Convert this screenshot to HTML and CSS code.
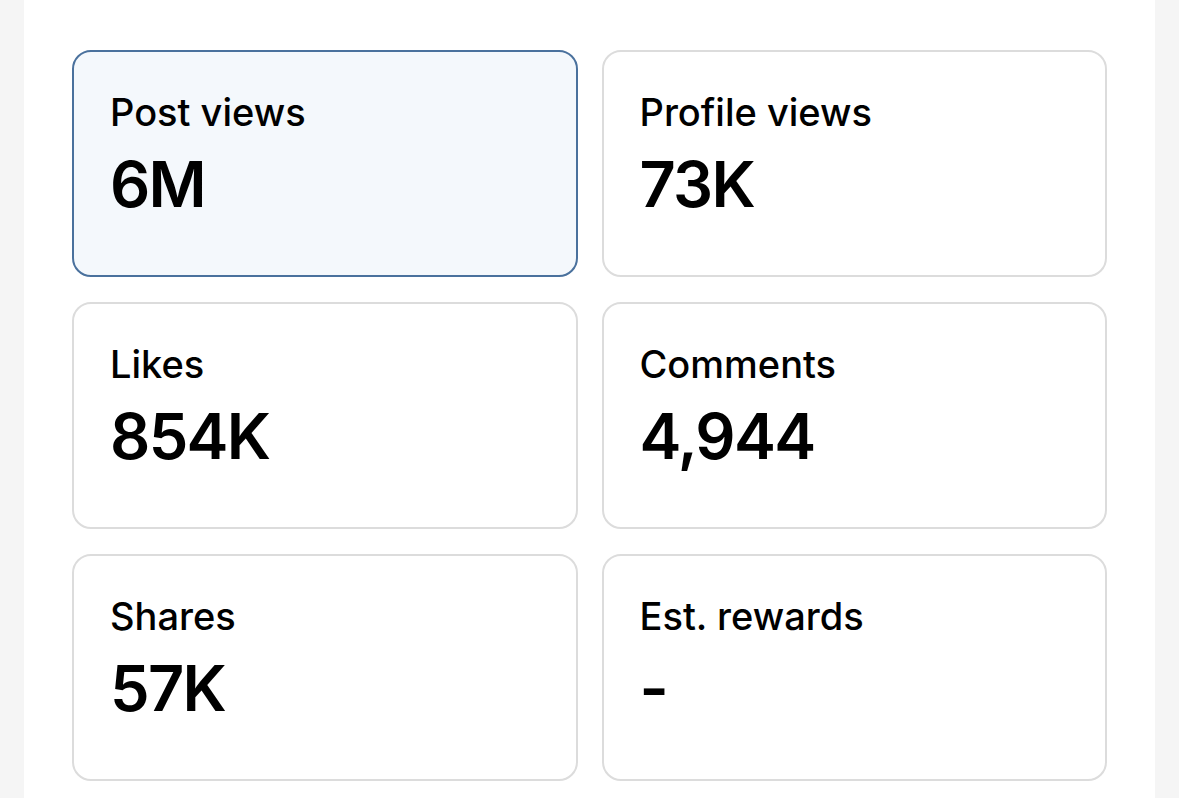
FILE: index.html
```html
<!DOCTYPE html>
<html>
<head>
<meta charset="utf-8">
<link rel="stylesheet" href="styles.css">
</head>
<body>
<div class="page">
  <div class="panel">
    <div class="grid">
      <div class="card active">
        <div class="label">Post views</div>
        <div class="value">6M</div>
      </div>
      <div class="card">
        <div class="label">Profile views</div>
        <div class="value">73K</div>
      </div>
      <div class="card">
        <div class="label">Likes</div>
        <div class="value">854K</div>
      </div>
      <div class="card">
        <div class="label">Comments</div>
        <div class="value">4,944</div>
      </div>
      <div class="card">
        <div class="label">Shares</div>
        <div class="value">57K</div>
      </div>
      <div class="card">
        <div class="label">Est. rewards</div>
        <div class="value">-</div>
      </div>
    </div>
  </div>
</div>
</body>
</html>
```

FILE: styles.css
```css
html, body {
  margin: 0;
  padding: 0;
  background: #f5f5f5;
}
body {
  font-family: Inter, "Noto Sans", sans-serif;
  color: #000;
}
.page {
  padding: 0 24px;
  height: 798px;
  overflow: hidden;
}
.panel {
  background: #fff;
  padding: 50px 48px 40px 48px;
  min-height: 798px;
  box-sizing: border-box;
}
.grid {
  display: grid;
  grid-template-columns: 1fr 1fr;
  column-gap: 24px;
  row-gap: 25px;
}
.card {
  height: 227px;
  box-sizing: border-box;
  border: 2px solid #dcdcdc;
  border-radius: 19px;
  padding: 36px 36px;
  background: #fff;
}
.card.active {
  border-color: #4a719d;
  background: #f4f8fc;
}
.label {
  font-size: 38px;
  font-weight: 500;
  line-height: 48px;
  letter-spacing: 0;
}
.value {
  margin-top: 8px;
  font-size: 63px;
  font-weight: 600;
  line-height: 80px;
  letter-spacing: -1.7px;
}
```
